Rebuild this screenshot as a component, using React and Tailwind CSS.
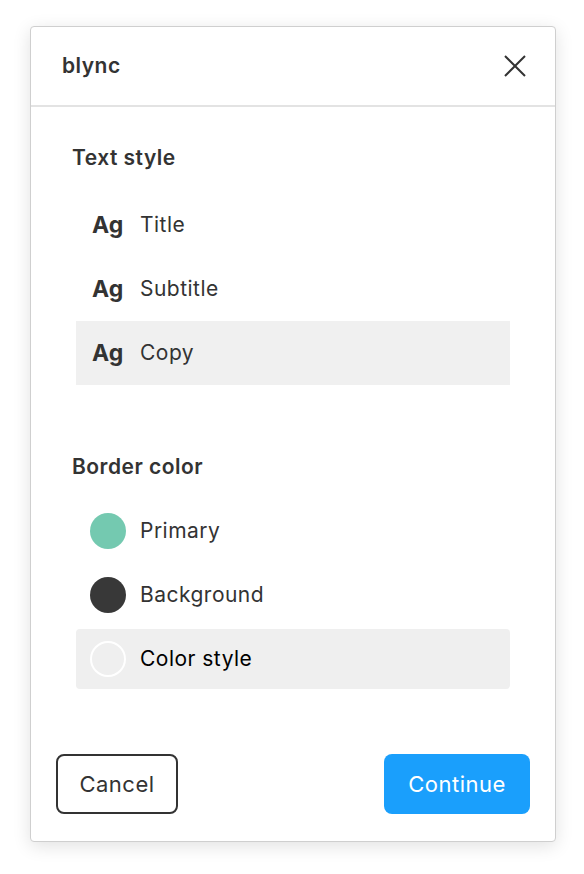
import { useState } from "react";

const textStyles = ["Title", "Subtitle", "Copy"];

const borderColors = [
  { name: "Primary", swatch: "bg-[#74c9b0]" },
  { name: "Background", swatch: "bg-[#383838]" },
  { name: "Color style", swatch: "bg-transparent border-2 border-white" },
];

const CloseIcon = () => (
  <svg width="24" height="24" viewBox="0 0 24 24" fill="none">
    <path d="M2 2L22 22M22 2L2 22" stroke="#333" strokeWidth="2" />
  </svg>
);

export default function App() {
  const [style, setStyle] = useState("Copy");
  const [color, setColor] = useState("Color style");

  return (
    <div className="min-h-[874px] bg-white pt-[26px] pl-[30px] font-['Inter',sans-serif] tracking-[0.03em] text-[#333]">
      <div className="w-[526px] rounded-[4px] border border-[#cfcfcf] bg-white shadow-[0_4px_18px_rgba(0,0,0,0.12)]">
        <div className="flex h-[80px] items-center justify-between border-b-2 border-[#e3e3e3] pl-[31px] pr-[28px]">
          <h1 className="text-[21px] font-semibold">blync</h1>
          <button className="flex items-center justify-center">
            <CloseIcon />
          </button>
        </div>

        <div className="px-[41px] pt-[39px]">
          <h2 className="text-[21px] font-semibold leading-[24px]">Text style</h2>
          <div className="mt-[23px] flex flex-col">
            {textStyles.map((s) => (
              <div
                key={s}
                onClick={() => setStyle(s)}
                className={
                  "mx-[4px] flex h-[64px] items-center gap-[16px] pl-[16px] " +
                  (style === s ? "bg-[#f0f0f0]" : "")
                }
              >
                <span className="w-[32px] text-[23px] font-bold tracking-[0.01em]">Ag</span>
                <span className="text-[21px]">{s}</span>
              </div>
            ))}
          </div>

          <h2 className="mt-[70px] text-[21px] font-semibold leading-[24px]">Border color</h2>
          <div className="mt-[20px] flex flex-col">
            {borderColors.map((c) => (
              <div
                key={c.name}
                onClick={() => setColor(c.name)}
                className={
                  "mx-[4px] flex items-center gap-[14px] rounded-[4px] pl-[14px] " +
                  (color === c.name ? "mt-[2px] h-[60px] bg-[#efefef] text-black" : "h-[64px]")
                }
              >
                <span className={"h-[36px] w-[36px] rounded-full " + c.swatch} />
                <span className="text-[21px]">{c.name}</span>
              </div>
            ))}
          </div>
        </div>

        <div className="flex items-center justify-between px-[25px] pb-[27px] pt-[65px]">
          <button className="h-[60px] w-[122px] rounded-[8px] border-2 border-[#333] text-[22px]">
            Cancel
          </button>
          <button className="h-[60px] w-[146px] rounded-[8px] bg-[#1a9ffc] text-[22px] text-white">
            Continue
          </button>
        </div>
      </div>
    </div>
  );
}
